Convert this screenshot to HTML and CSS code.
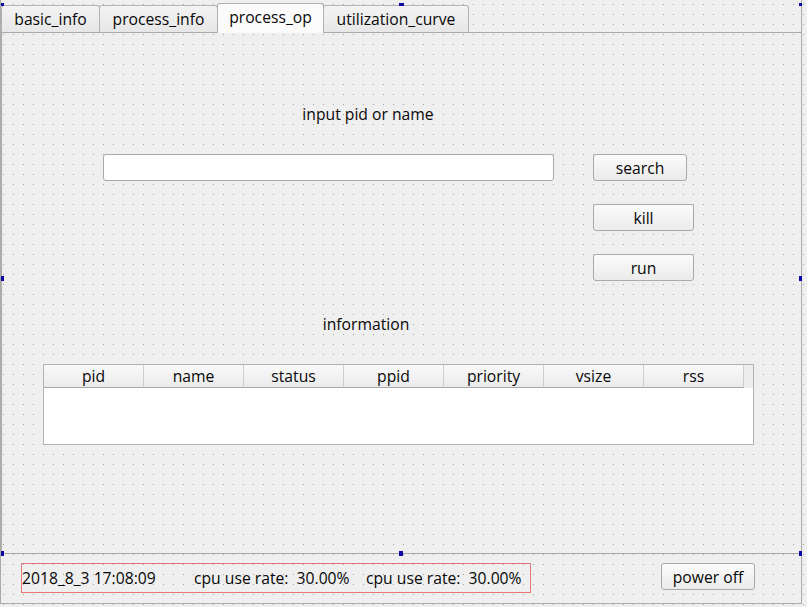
FILE: index.html
```html
<!DOCTYPE html>
<html>
<head>
<meta charset="utf-8">
<link rel="stylesheet" href="styles.css">
</head>
<body>
<div class="form">
  <div class="tabwidget">
    <div class="tabbar">
      <div class="tab t-basic">basic_info</div>
      <div class="tab t-pinfo">process_info</div>
      <div class="tab t-pop selected">process_op</div>
      <div class="tab t-util">utilization_curve</div>
    </div>
    <div class="pane">
      <div class="caption prompt">input pid or name</div>
      <div class="search-row">
        <div class="input"></div>
        <div class="btn search">search</div>
      </div>
      <div class="btn side kill">kill</div>
      <div class="btn side run">run</div>
      <div class="caption info">information</div>
      <div class="table">
        <div class="thead">
          <div class="th">pid</div>
          <div class="th">name</div>
          <div class="th">status</div>
          <div class="th">ppid</div>
          <div class="th">priority</div>
          <div class="th">vsize</div>
          <div class="th">rss</div>
          <div class="filler"></div>
        </div>
        <div class="tbody"></div>
      </div>
    </div>
  </div>
  <div class="bottom">
    <div class="status">
      <span class="s s1">2018_8_3 17:08:09</span>
      <span class="s s2">cpu use rate:  30.00%</span>
      <span class="s s3">cpu use rate:  30.00%</span>
    </div>
    <div class="btn power">power off</div>
  </div>
  <div class="handle h-tl"></div>
  <div class="handle h-tm"></div>
  <div class="handle h-tr"></div>
  <div class="handle h-ml"></div>
  <div class="handle h-mr"></div>
  <div class="handle h-bl"></div>
  <div class="handle h-bm"></div>
  <div class="handle h-br"></div>
</div>
</body>
</html>
```

FILE: styles.css
```css
* { box-sizing: border-box; }
html, body { margin: 0; height: 100%; }
body {
  background-color: #efefef;
  background-image: conic-gradient(at 1px 1px, transparent 75%, #a3a3a3 0);
  background-size: 10px 10px;
  background-position: 3px 4px;
  font-family: "Open Sans", "DejaVu Sans", sans-serif;
  font-size: 15.7px;
  line-height: 20px;
  color: #080808;
}
.form {
  position: relative;
  width: 802px;
  height: 604px;
  border-left: 1px solid #ababab;
  border-right: 1px solid #ababab;
  border-bottom: 1px solid #ababab;
  padding-top: 5px;
}
.tabwidget { width: 800px; }
.tabbar {
  display: flex;
  align-items: flex-end;
  height: 27px;
}
.tab {
  height: 27px;
  margin-left: -1px;
  border: 1px solid #b4b4b4;
  border-bottom: none;
  border-radius: 3px 3px 0 0;
  background: linear-gradient(#f3f3f3, #e7e7e7);
  display: flex;
  align-items: center;
  justify-content: center;
  white-space: nowrap;
}
.t-basic { width: 99px; margin-left: 0; }
.t-pinfo { width: 119px; }
.t-pop { width: 107px; }
.t-util { width: 146px; }
.tab.selected {
  position: relative;
  z-index: 2;
  height: 30px;
  margin-bottom: -1px;
  padding-bottom: 3px;
  background: #fbfbfb;
  border-color: #b0b0b0;
}
.pane {
  height: 522px;
  border-top: 1px solid #ababab;
  border-left: 1px solid #ababab;
  border-bottom: 1px solid #ababab;
  display: flex;
  flex-direction: column;
  align-items: flex-start;
}
.caption {
  width: 200px;
  height: 20px;
  line-height: 20px;
  text-align: center;
}
.prompt { margin: 71px 0 0 266px; }
.info { margin: 33px 0 0 264px; }
.search-row {
  display: flex;
  gap: 39px;
  margin: 30px 0 0 101px;
}
.input {
  width: 451px;
  height: 27px;
  background: #ffffff;
  border: 1px solid #a9a9a9;
  border-radius: 3px;
}
.btn {
  height: 27px;
  border: 1px solid #a9a9a9;
  border-radius: 3px;
  background: linear-gradient(#fbfbfb, #ebebeb);
  display: flex;
  align-items: center;
  justify-content: center;
  white-space: nowrap;
}
.search { width: 94px; }
.side { width: 101px; margin: 23px 0 0 591px; }
.table {
  margin: 30px 0 0 41px;
  width: 711px;
  height: 81px;
  border: 1px solid #b2b2b2;
  background: #ffffff;
  display: flex;
  flex-direction: column;
}
.thead {
  display: flex;
  height: 23px;
  background: #ededed;
}
.th {
  width: 100px;
  height: 23px;
  line-height: 22px;
  text-align: center;
  border-right: 1px solid #cdcdcd;
  border-bottom: 1px solid #a9a9a9;
  background: linear-gradient(#f9f9f9, #ebebeb);
}
.filler { flex: 1; }
.tbody { flex: 1; background: #ffffff; }
.bottom {
  display: flex;
  align-items: flex-start;
  margin-top: 9px;
  padding-left: 20px;
}
.status {
  width: 510px;
  height: 30px;
  border: 1px solid #e47676;
  display: flex;
  align-items: center;
  white-space: pre;
}
.s1 { width: 172px; }
.s2 { width: 172px; }
.power { width: 94px; margin-left: 130px; }
.handle {
  position: absolute;
  background: #0a0aa8;
}
.h-tl { left: 0; top: 3px; width: 3px; height: 3px; }
.h-tm { left: 398px; top: 3px; width: 5px; height: 3px; }
.h-tr { left: 798px; top: 3px; width: 3px; height: 3px; }
.h-ml { left: 0; top: 276px; width: 3px; height: 5px; }
.h-mr { left: 798px; top: 276px; width: 3px; height: 5px; }
.h-bl { left: 0; top: 551px; width: 3px; height: 5px; }
.h-bm { left: 398px; top: 551px; width: 4px; height: 5px; }
.h-br { left: 798px; top: 551px; width: 3px; height: 5px; }
```
